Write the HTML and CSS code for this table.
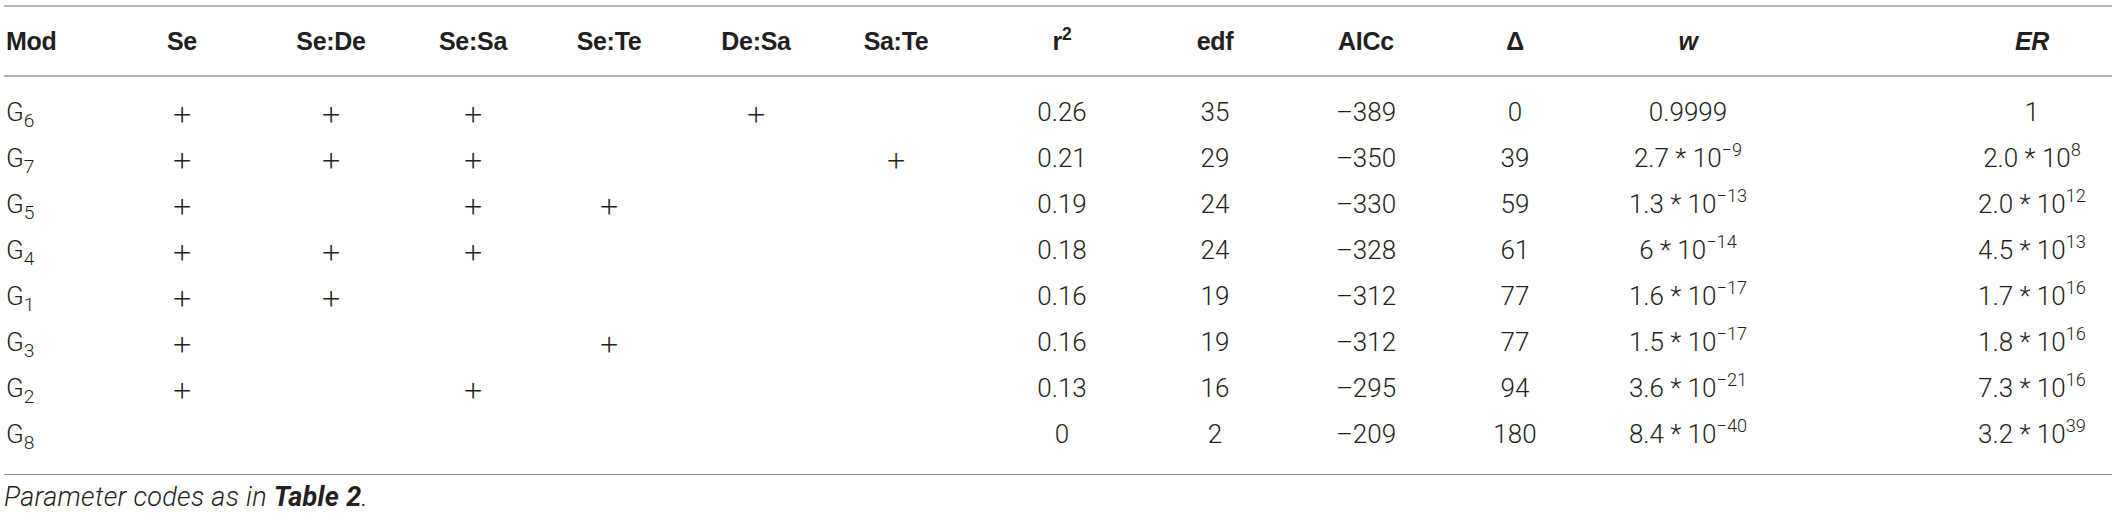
FILE: index.html
```html
<!DOCTYPE html>
<html>
<head>
<meta charset="utf-8">
<link rel="stylesheet" href="styles.css">
</head>
<body>
<div class="tbl">
  <div class="row head">
    <div class="c mod">Mod</div>
    <div class="c">Se</div>
    <div class="c">Se:De</div>
    <div class="c">Se:Sa</div>
    <div class="c">Se:Te</div>
    <div class="c">De:Sa</div>
    <div class="c">Sa:Te</div>
    <div class="c">r<sup>2</sup></div>
    <div class="c">edf</div>
    <div class="c">AICc</div>
    <div class="c">Δ</div>
    <div class="c"><i>w</i></div>
    <div class="c er"><i>ER</i></div>
  </div>
  <div class="body">
    <div class="row">
      <div class="c mod">G<sub>6</sub></div>
      <div class="c p">+</div><div class="c p">+</div><div class="c p">+</div><div class="c p"></div><div class="c p">+</div><div class="c p"></div>
      <div class="c">0.26</div><div class="c">35</div><div class="c">–389</div><div class="c">0</div>
      <div class="c">0.9999</div><div class="c er">1</div>
    </div>
    <div class="row">
      <div class="c mod">G<sub>7</sub></div>
      <div class="c p">+</div><div class="c p">+</div><div class="c p">+</div><div class="c p"></div><div class="c p"></div><div class="c p">+</div>
      <div class="c">0.21</div><div class="c">29</div><div class="c">–350</div><div class="c">39</div>
      <div class="c">2.7 * 10<sup>−9</sup></div><div class="c er">2.0 * 10<sup>8</sup></div>
    </div>
    <div class="row">
      <div class="c mod">G<sub>5</sub></div>
      <div class="c p">+</div><div class="c p"></div><div class="c p">+</div><div class="c p">+</div><div class="c p"></div><div class="c p"></div>
      <div class="c">0.19</div><div class="c">24</div><div class="c">–330</div><div class="c">59</div>
      <div class="c">1.3 * 10<sup>−13</sup></div><div class="c er">2.0 * 10<sup>12</sup></div>
    </div>
    <div class="row">
      <div class="c mod">G<sub>4</sub></div>
      <div class="c p">+</div><div class="c p">+</div><div class="c p">+</div><div class="c p"></div><div class="c p"></div><div class="c p"></div>
      <div class="c">0.18</div><div class="c">24</div><div class="c">–328</div><div class="c">61</div>
      <div class="c">6 * 10<sup>−14</sup></div><div class="c er">4.5 * 10<sup>13</sup></div>
    </div>
    <div class="row">
      <div class="c mod">G<sub>1</sub></div>
      <div class="c p">+</div><div class="c p">+</div><div class="c p"></div><div class="c p"></div><div class="c p"></div><div class="c p"></div>
      <div class="c">0.16</div><div class="c">19</div><div class="c">–312</div><div class="c">77</div>
      <div class="c">1.6 * 10<sup>−17</sup></div><div class="c er">1.7 * 10<sup>16</sup></div>
    </div>
    <div class="row">
      <div class="c mod">G<sub>3</sub></div>
      <div class="c p">+</div><div class="c p"></div><div class="c p"></div><div class="c p">+</div><div class="c p"></div><div class="c p"></div>
      <div class="c">0.16</div><div class="c">19</div><div class="c">–312</div><div class="c">77</div>
      <div class="c">1.5 * 10<sup>−17</sup></div><div class="c er">1.8 * 10<sup>16</sup></div>
    </div>
    <div class="row">
      <div class="c mod">G<sub>2</sub></div>
      <div class="c p">+</div><div class="c p"></div><div class="c p">+</div><div class="c p"></div><div class="c p"></div><div class="c p"></div>
      <div class="c">0.13</div><div class="c">16</div><div class="c">–295</div><div class="c">94</div>
      <div class="c">3.6 * 10<sup>−21</sup></div><div class="c er">7.3 * 10<sup>16</sup></div>
    </div>
    <div class="row">
      <div class="c mod">G<sub>8</sub></div>
      <div class="c p"></div><div class="c p"></div><div class="c p"></div><div class="c p"></div><div class="c p"></div><div class="c p"></div>
      <div class="c">0</div><div class="c">2</div><div class="c">–209</div><div class="c">180</div>
      <div class="c">8.4 * 10<sup>−40</sup></div><div class="c er">3.2 * 10<sup>39</sup></div>
    </div>
  </div>
</div>
<p class="caption">Parameter codes as in <b>Table 2</b>.</p>
</body>
</html>
```

FILE: styles.css
```css
html, body {
  margin: 0;
  padding: 0;
  background: #ffffff;
}
body {
  font-family: Roboto, "Liberation Sans", Arial, sans-serif;
  font-weight: 300;
  color: #231f20;
  font-size: 26px;
}
.tbl {
  width: 2108px;
  margin: 5px 0 0 4px;
}
.row {
  display: grid;
  grid-template-columns: 110px 136px 162px 122px 150px 144px 136px 196px 110px 192px 106px 240px 304px;
  align-items: center;
  height: 46px;
  line-height: 28px;
}
.head {
  height: 68px;
  border-top: 2px solid #b4b4b4;
  border-bottom: 2px solid #b4b4b4;
  font-family: "Liberation Sans", Arial, sans-serif;
  font-weight: bold;
  font-size: 25px;
  letter-spacing: -0.3px;
  color: #231f20;
}
.body {
  padding: 12px 0 17px;
  border-bottom: 1px solid #8a8a8a;
}
.c {
  text-align: center;
  white-space: nowrap;
}
.mod {
  text-align: left;
  padding-left: 2px;
}
.er {
  padding-left: 144px;
}
.p {
  font-family: Inter, Roboto, sans-serif;
  font-size: 36px;
  font-weight: 200;
  color: #231f20;
}
sup {
  font-size: 70%;
  line-height: 0;
  vertical-align: 0.6em;
}
sub {
  font-size: 74%;
  line-height: 0;
  vertical-align: -0.3em;
}
.caption {
  margin: 8px 0 0 4px;
  font-style: italic;
  font-size: 27px;
  letter-spacing: 0.3px;
  line-height: 28px;
  color: #231f20;
}
.caption b {
  font-weight: bold;
}
```
